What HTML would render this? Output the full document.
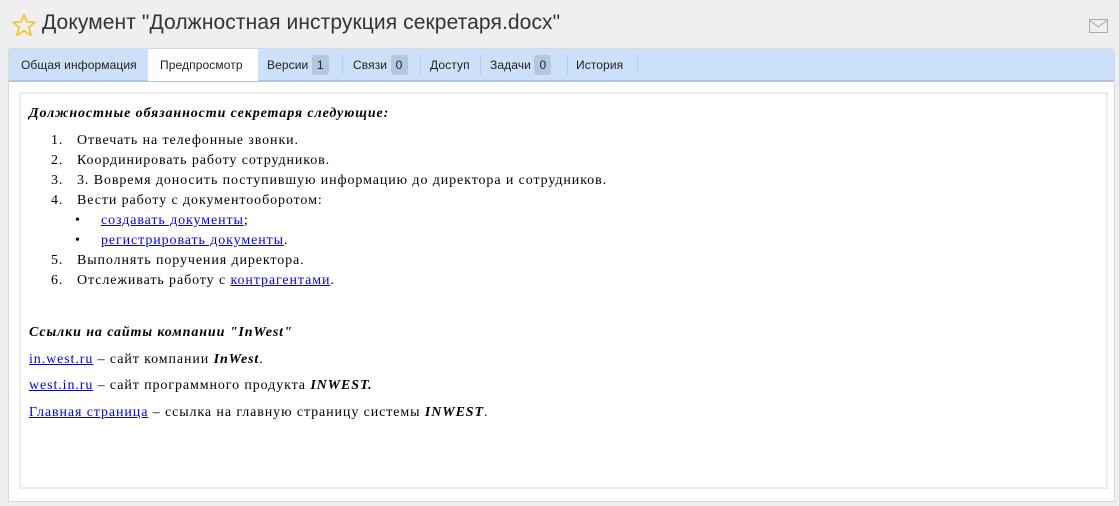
<!DOCTYPE html>
<html><head><meta charset="utf-8"><style>
*{margin:0;padding:0;box-sizing:border-box}
body{width:1119px;height:506px;background:#efefef;position:relative;overflow:hidden;font-family:"Liberation Sans",sans-serif}
.title{position:absolute;left:42px;top:11px;font-size:21px;color:#333;white-space:nowrap;letter-spacing:0.1px}
.star{position:absolute;left:12px;top:13px}
.mail{position:absolute;left:1089px;top:19px}
.panel{position:absolute;left:8px;top:48px;width:1107px;height:454px;background:#fff;border:1px solid #d4d8e0;border-radius:3px 3px 0 0}
.bar{position:absolute;left:0;top:0;width:1105px;height:33px;background:#cce0fa;border-bottom:2px solid #b0c8e6;border-radius:3px 3px 0 0}
.tab{position:absolute;top:1px;height:31px;line-height:31px;font-size:12px;color:#222;white-space:nowrap;letter-spacing:0.1px}
.act{background:#fff;height:32px;top:0;line-height:33px}
.sep{position:absolute;top:5px;width:1px;height:21px;background:#b8cce6}
.badge{display:inline-block;background:#b4c8dc;border-radius:3px;width:17px;height:20px;line-height:20px;text-align:center;vertical-align:middle;margin-top:-2px}
.inner{position:absolute;left:10px;top:43px;width:1089px;height:397px;border:2px solid #efece3;font-family:"Liberation Serif",serif;font-size:14px;color:#000;letter-spacing:0.9px}
.t{position:absolute;white-space:nowrap}
a{color:#00e;text-decoration:underline}
b i,i b{font-weight:bold;font-style:italic}
</style></head><body>
<svg class="star" width="24" height="24" viewBox="0 0 24 24"><polygon points="12,1.5 15,9 23,9.3 16.8,14.3 19,22.3 12,17.8 5,22.3 7.2,14.3 1,9.3 9,9" fill="none" stroke="#f2c81e" stroke-width="1.6" stroke-linejoin="round"/></svg>
<div class="title">Документ "Должностная инструкция секретаря.docx"</div>
<svg class="mail" width="19" height="14" viewBox="0 0 19 14"><rect x="0.5" y="0.5" width="18" height="13" fill="none" stroke="#aaa"/><polyline points="0.5,1 9.5,8 18.5,1" fill="none" stroke="#aaa"/></svg>
<div class="panel">
<div class="bar">
<div class="tab" style="left:12px">Общая информация</div>
<div class="tab act" style="left:139px;width:110px;padding-left:12px">Предпросмотр</div>
<div class="tab" style="left:258px">Версии <span class="badge">1</span></div>
<div class="sep" style="left:333px"></div>
<div class="tab" style="left:344px">Связи <span class="badge">0</span></div>
<div class="sep" style="left:411px"></div>
<div class="tab" style="left:421px">Доступ</div>
<div class="sep" style="left:471px"></div>
<div class="tab" style="left:481px">Задачи <span class="badge">0</span></div>
<div class="sep" style="left:558px"></div>
<div class="tab" style="left:567px">История</div>
<div class="sep" style="left:628px"></div>
</div>
<div class="inner">
<div class="t" style="left:8px;top:12px"><b><i>Должностные обязанности секретаря следующие:</i></b></div>
<div class="t" style="left:30px;top:39px">1.</div><div class="t" style="left:56px;top:39px">Отвечать на телефонные звонки.</div>
<div class="t" style="left:30px;top:59px">2.</div><div class="t" style="left:56px;top:59px">Координировать работу сотрудников.</div>
<div class="t" style="left:30px;top:79px">3.</div><div class="t" style="left:56px;top:79px">3. Вовремя доносить поступившую информацию до директора и сотрудников.</div>
<div class="t" style="left:30px;top:99px">4.</div><div class="t" style="left:56px;top:99px">Вести работу с документооборотом:</div>
<div class="t" style="left:54px;top:119px">•</div><div class="t" style="left:80px;top:119px"><a>создавать документы</a>;</div>
<div class="t" style="left:54px;top:139px">•</div><div class="t" style="left:80px;top:139px"><a>регистрировать документы</a>.</div>
<div class="t" style="left:30px;top:159px">5.</div><div class="t" style="left:56px;top:159px">Выполнять поручения директора.</div>
<div class="t" style="left:30px;top:179px">6.</div><div class="t" style="left:56px;top:179px">Отслеживать работу с <a>контрагентами</a>.</div>
<div class="t" style="left:8px;top:231px"><b><i>Ссылки на сайты компании "InWest"</i></b></div>
<div class="t" style="left:8px;top:258px"><a>in.west.ru</a> – сайт компании <b><i>InWest</i></b>.</div>
<div class="t" style="left:8px;top:284px"><a>west.in.ru</a> – сайт программного продукта <b><i>INWEST.</i></b></div>
<div class="t" style="left:8px;top:311px"><a>Главная страница</a> – ссылка на главную страницу системы <b><i>INWEST</i></b>.</div>
</div>
</div>
</body></html>
